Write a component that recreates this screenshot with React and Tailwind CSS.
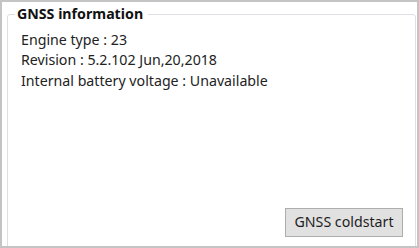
import React from "react";

export default function App() {
  const lines = [
    "Engine type : 23",
    "Revision : 5.2.102 Jun,20,2018",
    "Internal battery voltage : Unavailable",
  ];

  return (
    <div
      className="w-[419px] h-[248px] overflow-hidden border-2 border-[#c4c4c4] bg-white text-[#1e1e1e]"
      style={{ fontFamily: '"Noto Sans", "Open Sans", sans-serif' }}
    >
      <fieldset className="mt-[2px] ml-[5px] mr-[1px] h-[260px] rounded-[3px] border border-[#dcdfe4] px-[7px]">
        <legend className="pl-[2px] pr-[5px] text-[14.2px] leading-[20px] font-bold text-[#111]">
          GNSS information
        </legend>
        <div className="mt-[6px] pl-[6px] text-[14.2px] leading-[20.3px] text-[#222]">
          {lines.map((line) => (
            <div key={line}>{line}</div>
          ))}
        </div>
        <div className="mt-[117px] flex justify-end pr-[5px]">
          <button className="h-[29px] w-[118px] border border-[#adadad] bg-[#e1e1e1] text-[14.2px] leading-none text-[#1e1e1e]">
            GNSS coldstart
          </button>
        </div>
      </fieldset>
    </div>
  );
}
